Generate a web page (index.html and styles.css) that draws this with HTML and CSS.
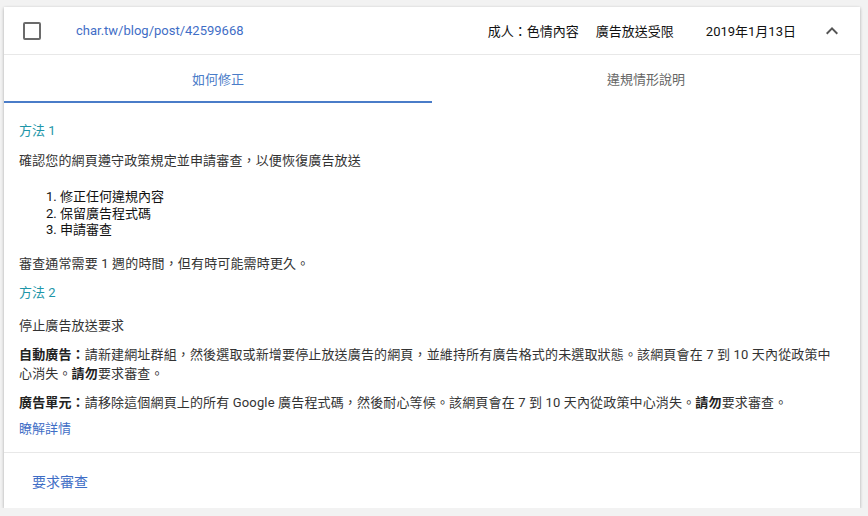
FILE: index.html
```html
<!DOCTYPE html>
<html lang="zh-Hant">
<head>
  <meta charset="UTF-8" />
  <title>政策中心</title>
  <link rel="stylesheet" href="styles.css">
</head>
<body>

  <div class="card">
    <div class="card-header">
      <span class="checkbox"></span>
      <a class="page-url" href="#">char.tw/blog/post/42599668</a>
      <span class="issue">成人：色情內容</span>
      <span class="status">廣告放送受限</span>
      <span class="date">2019年1月13日</span>
      <svg class="chevron" width="24" height="24" viewBox="0 0 24 24">
        <path d="M7.41 15.41L12 10.83l4.59 4.58L18 14l-6-6-6 6z" fill="#555"/>
      </svg>
    </div>

    <div class="tabs">
      <div class="tab active">如何修正</div>
      <div class="tab">違規情形說明</div>
    </div>

    <div class="content">
      <div class="method">方法 1</div>
      <p>確認您的網頁遵守政策規定並申請審查，以便恢復廣告放送</p>
      <ol class="steps">
        <li>修正任何違規內容</li>
        <li>保留廣告程式碼</li>
        <li>申請審查</li>
      </ol>
      <p>審查通常需要 1 週的時間，但有時可能需時更久。</p>

      <div class="method second">方法 2</div>
      <p>停止廣告放送要求</p>
      <p><strong>自動廣告：</strong>請新建網址群組，然後選取或新增要停止放送廣告的網頁，並維持所有廣告格式的未選取狀態。該網頁會在 7 到 10 天內從政策中心消失。<strong>請勿</strong>要求審查。</p>
      <p><strong>廣告單元：</strong>請移除這個網頁上的所有 Google 廣告程式碼，然後耐心等候。該網頁會在 7 到 10 天內從政策中心消失。<strong>請勿</strong>要求審查。</p>
      <a class="learn-more" href="#">瞭解詳情</a>
    </div>

    <div class="card-footer">
      <a class="action" href="#">要求審查</a>
    </div>
  </div>

</body>
</html>
```

FILE: styles.css
```css
* {
  box-sizing: border-box;
  margin: 0;
  padding: 0;
}

body {
  font-family: Roboto, "Noto Sans CJK TC", sans-serif;
  font-size: 13px;
  color: #333;
  background-color: #f2f2f2;
  padding: 7px 8px 0 4px;
}

a {
  text-decoration: none;
}

.card {
  background-color: #fff;
  box-shadow: 0 1px 3px rgba(0, 0, 0, 0.3);
  height: 501px;
  display: flex;
  flex-direction: column;
}

.card-header {
  display: flex;
  align-items: center;
  height: 48px;
  border-bottom: 1px solid #e8e8e8;
  padding: 0 16px 0 19px;
  color: #111;
}

.checkbox {
  width: 18px;
  height: 18px;
  border: 2px solid #6b6b6b;
  border-radius: 2px;
  margin-right: 35px;
}

.page-url {
  color: #3f6ec6;
  flex: 1;
}

.status {
  margin-left: 17px;
}

.date {
  margin-left: 32px;
}

.chevron {
  margin-left: 24px;
}

.tabs {
  display: flex;
  height: 48px;
}

.tab {
  flex: 1;
  display: flex;
  align-items: center;
  justify-content: center;
  color: #666;
  padding-bottom: 1px;
}

.tab.active {
  color: #4a7cc8;
  border-bottom: 2px solid #4a7cc8;
  padding-bottom: 0;
}

.content {
  flex: 1;
  padding: 18px 25px 0 15px;
  border-bottom: 1px solid #e8e8e8;
  line-height: 19px;
}

.method {
  color: #1e96a8;
  margin-bottom: 11px;
}

.method.second {
  margin-bottom: 14px;
}

.content p {
  margin-bottom: 10px;
  letter-spacing: 0.15px;
}

.content strong {
  color: #222;
}

.steps {
  padding-left: 41px;
  margin-top: 19px;
  margin-bottom: 15px;
  color: #111;
  line-height: 16.5px;
}

.learn-more {
  display: block;
  color: #3f6ec6;
  margin-top: -3px;
}

.card-footer {
  height: 55px;
  display: flex;
  align-items: center;
  padding-left: 28px;
}

.action {
  color: #3f6ec6;
  font-size: 14px;
}
```
